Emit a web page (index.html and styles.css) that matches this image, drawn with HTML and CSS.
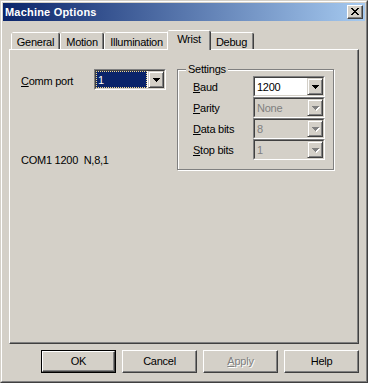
FILE: index.html
```html
<!DOCTYPE html>
<html>
<head>
<meta charset="utf-8">
<link rel="stylesheet" href="styles.css">
</head>
<body>
<div class="window">
  <div class="frame">
    <div class="titlebar">
      <span class="title">Machine Options</span>
      <div class="close">
        <svg width="8" height="7" viewBox="0 0 8 7" shape-rendering="crispEdges">
          <rect x="0" y="0" width="2" height="1"/><rect x="6" y="0" width="2" height="1"/>
          <rect x="1" y="1" width="2" height="1"/><rect x="5" y="1" width="2" height="1"/>
          <rect x="2" y="2" width="4" height="1"/>
          <rect x="3" y="3" width="2" height="1"/>
          <rect x="2" y="4" width="4" height="1"/>
          <rect x="1" y="5" width="2" height="1"/><rect x="5" y="5" width="2" height="1"/>
          <rect x="0" y="6" width="2" height="1"/><rect x="6" y="6" width="2" height="1"/>
        </svg>
      </div>
    </div>
    <div class="body">
      <div class="tabs">
        <div class="tab w-general">General</div>
        <div class="tab w-motion">Motion</div>
        <div class="tab w-illum">Illumination</div>
        <div class="tab active w-wrist">Wrist</div>
        <div class="tab w-debug">Debug</div>
      </div>
      <div class="panel">
        <div class="left">
          <div class="row">
            <span class="label comm-label"><u>C</u>omm port</span>
            <div class="combo">
              <div class="combo-in">
                <div class="field selected"><span>1</span></div>
                <div class="drop">
                  <svg width="7" height="4" viewBox="0 0 7 4" shape-rendering="crispEdges">
                    <rect x="0" y="0" width="7" height="1"/><rect x="1" y="1" width="5" height="1"/><rect x="2" y="2" width="3" height="1"/><rect x="3" y="3" width="1" height="1"/>
                  </svg>
                </div>
              </div>
            </div>
          </div>
          <div class="status">COM1 1200&nbsp; N,8,1</div>
        </div>
        <div class="group">
          <span class="legend">Settings</span>
          <div class="grow">
            <span class="label glabel"><u>B</u>aud</span>
            <div class="combo">
              <div class="combo-in">
                <div class="field"><span>1200</span></div>
                <div class="drop">
                  <svg width="7" height="4" viewBox="0 0 7 4" shape-rendering="crispEdges">
                    <rect x="0" y="0" width="7" height="1"/><rect x="1" y="1" width="5" height="1"/><rect x="2" y="2" width="3" height="1"/><rect x="3" y="3" width="1" height="1"/>
                  </svg>
                </div>
              </div>
            </div>
          </div>
          <div class="grow">
            <span class="label glabel"><u>P</u>arity</span>
            <div class="combo disabled">
              <div class="combo-in">
                <div class="field"><span>None</span></div>
                <div class="drop">
                  <svg width="8" height="5" viewBox="0 0 8 5" shape-rendering="crispEdges">
                    <g fill="#fff"><rect x="1" y="1" width="7" height="1"/><rect x="2" y="2" width="5" height="1"/><rect x="3" y="3" width="3" height="1"/><rect x="4" y="4" width="1" height="1"/></g>
                    <g fill="#808080"><rect x="0" y="0" width="7" height="1"/><rect x="1" y="1" width="5" height="1"/><rect x="2" y="2" width="3" height="1"/><rect x="3" y="3" width="1" height="1"/></g>
                  </svg>
                </div>
              </div>
            </div>
          </div>
          <div class="grow">
            <span class="label glabel"><u>D</u>ata bits</span>
            <div class="combo disabled">
              <div class="combo-in">
                <div class="field"><span>8</span></div>
                <div class="drop">
                  <svg width="8" height="5" viewBox="0 0 8 5" shape-rendering="crispEdges">
                    <g fill="#fff"><rect x="1" y="1" width="7" height="1"/><rect x="2" y="2" width="5" height="1"/><rect x="3" y="3" width="3" height="1"/><rect x="4" y="4" width="1" height="1"/></g>
                    <g fill="#808080"><rect x="0" y="0" width="7" height="1"/><rect x="1" y="1" width="5" height="1"/><rect x="2" y="2" width="3" height="1"/><rect x="3" y="3" width="1" height="1"/></g>
                  </svg>
                </div>
              </div>
            </div>
          </div>
          <div class="grow">
            <span class="label glabel"><u>S</u>top bits</span>
            <div class="combo disabled">
              <div class="combo-in">
                <div class="field"><span>1</span></div>
                <div class="drop">
                  <svg width="8" height="5" viewBox="0 0 8 5" shape-rendering="crispEdges">
                    <g fill="#fff"><rect x="1" y="1" width="7" height="1"/><rect x="2" y="2" width="5" height="1"/><rect x="3" y="3" width="3" height="1"/><rect x="4" y="4" width="1" height="1"/></g>
                    <g fill="#808080"><rect x="0" y="0" width="7" height="1"/><rect x="1" y="1" width="5" height="1"/><rect x="2" y="2" width="3" height="1"/><rect x="3" y="3" width="1" height="1"/></g>
                  </svg>
                </div>
              </div>
            </div>
          </div>
        </div>
      </div>
      <div class="buttons">
        <div class="push default"><div class="push-in">OK</div></div>
        <div class="push"><div class="push-in">Cancel</div></div>
        <div class="push disabled"><div class="push-in"><u>A</u>pply</div></div>
        <div class="push"><div class="push-in">Help</div></div>
      </div>
    </div>
  </div>
</div>
</body>
</html>
```

FILE: styles.css
```css
* { box-sizing: border-box; }
html, body { margin: 0; padding: 0; background: #d4d0c8; }
body {
  font-family: "Liberation Sans", Arial, sans-serif;
  font-size: 11px;
  letter-spacing: -0.25px;
  color: #000;
}
u { text-decoration: underline; text-underline-offset: 1px; }

.window {
  width: 368px;
  height: 383px;
  border: 1px solid;
  border-color: #d4d0c8 #404040 #404040 #d4d0c8;
  background: #d4d0c8;
}
.frame {
  height: 100%;
  border: 1px solid;
  border-color: #fff #808080 #808080 #fff;
  padding: 1px;
}

.titlebar {
  height: 18px;
  background: linear-gradient(to right, #0a246a, #a6caf0);
  display: flex;
  align-items: center;
  justify-content: space-between;
  padding: 0 2px 0 2px;
}
.title {
  color: #fff;
  font-weight: bold;
  letter-spacing: 0.2px;
  line-height: 18px;
}
.close {
  width: 16px;
  height: 14px;
  background: #d4d0c8;
  border: 1px solid;
  border-color: #fff #404040 #404040 #fff;
  box-shadow: inset -1px -1px #808080;
  display: flex;
  align-items: center;
  justify-content: center;
  padding: 0 0 1px 0;
}
.close svg { display: block; }

.body { padding: 0 6px; }

.tabs {
  display: flex;
  align-items: flex-end;
  height: 19px;
  margin-top: 9px;
  padding-left: 2px;
  position: relative;
  z-index: 1;
}
.tab {
  height: 17px;
  border-top: 1px solid #fff;
  border-left: 1px solid #fff;
  border-right: 1px solid #404040;
  box-shadow: inset -1px 0 #808080;
  background: #d4d0c8;
  display: flex;
  align-items: center;
  justify-content: center;
  padding-top: 1px;
  clip-path: polygon(0 2px, 2px 0, calc(100% - 2px) 0, 100% 2px, 100% 100%, 0 100%);
}
.tab.active {
  height: 20px;
  margin: 0 -2px -1px -2px;
  padding-top: 0;
  padding-bottom: 3px;
  position: relative;
  z-index: 2;
}
.w-general { width: 49px; }
.w-motion { width: 44px; }
.w-illum { width: 65px; }
.w-wrist { width: 44px; }
.w-debug { width: 45px; }

.panel {
  height: 295px;
  border: 1px solid;
  border-color: #fff #404040 #404040 #fff;
  box-shadow: inset -1px -1px #808080;
  display: flex;
  align-items: flex-start;
  padding: 19px 0 0 11px;
}

.left { width: 156px; }
.row { display: flex; align-items: center; height: 21px; }
.comm-label { width: 73px; padding-top: 3px; }
.status { margin-top: 64px; }

.combo {
  width: 72px;
  height: 21px;
  border: 1px solid;
  border-color: #808080 #fff #fff #808080;
}
.combo-in {
  height: 100%;
  border: 1px solid;
  border-color: #404040 #d4d0c8 #d4d0c8 #404040;
  background: #fff;
  display: flex;
}
.field {
  flex: 1;
  display: flex;
  align-items: center;
  padding-left: 2px;
}
.field.selected {
  background: #0a246a;
  color: #fff;
  outline: 1px dotted #f2d98c;
  outline-offset: -1px;
  margin-right: 1px;
}
.drop {
  width: 16px;
  height: 17px;
  background: #d4d0c8;
  border: 1px solid;
  border-color: #d4d0c8 #404040 #404040 #d4d0c8;
  box-shadow: inset 1px 1px #fff, inset -1px -1px #808080;
  display: flex;
  align-items: center;
  justify-content: center;
}
.drop svg { display: block; }
.combo.disabled .combo-in { background: #d4d0c8; }
.combo.disabled .field { color: #808080; }
.combo.disabled .drop svg { margin: 1px 0 0 1px; }

.group {
  position: relative;
  width: 157px;
  height: 101px;
  margin-left: 0;
  border: 1px solid #808080;
  box-shadow: 1px 1px 0 #fff, inset 1px 1px 0 #fff;
  padding: 6px 0 0 15px;
}
.legend {
  position: absolute;
  top: -7px;
  left: 8px;
  padding: 0 2px;
  background: #d4d0c8;
  line-height: 13px;
}
.grow { display: flex; align-items: center; height: 21px; }
.glabel { width: 60px; }

.buttons {
  display: flex;
  justify-content: flex-end;
  gap: 6px;
  margin-top: 6px;
}
.push {
  width: 75px;
  height: 23px;
  border: 1px solid;
  border-color: #fff #404040 #404040 #fff;
  box-shadow: inset -1px -1px #808080;
}
.push-in {
  height: 100%;
  display: flex;
  align-items: center;
  justify-content: center;
  padding-bottom: 1px;
}
.push.default {
  border-color: #000;
  box-shadow: none;
}
.push.default .push-in {
  border: 1px solid;
  border-color: #fff #404040 #404040 #fff;
  box-shadow: inset -1px -1px #808080;
}
.push.disabled .push-in {
  color: #808080;
  text-shadow: 1px 1px 0 #fff;
}
```
